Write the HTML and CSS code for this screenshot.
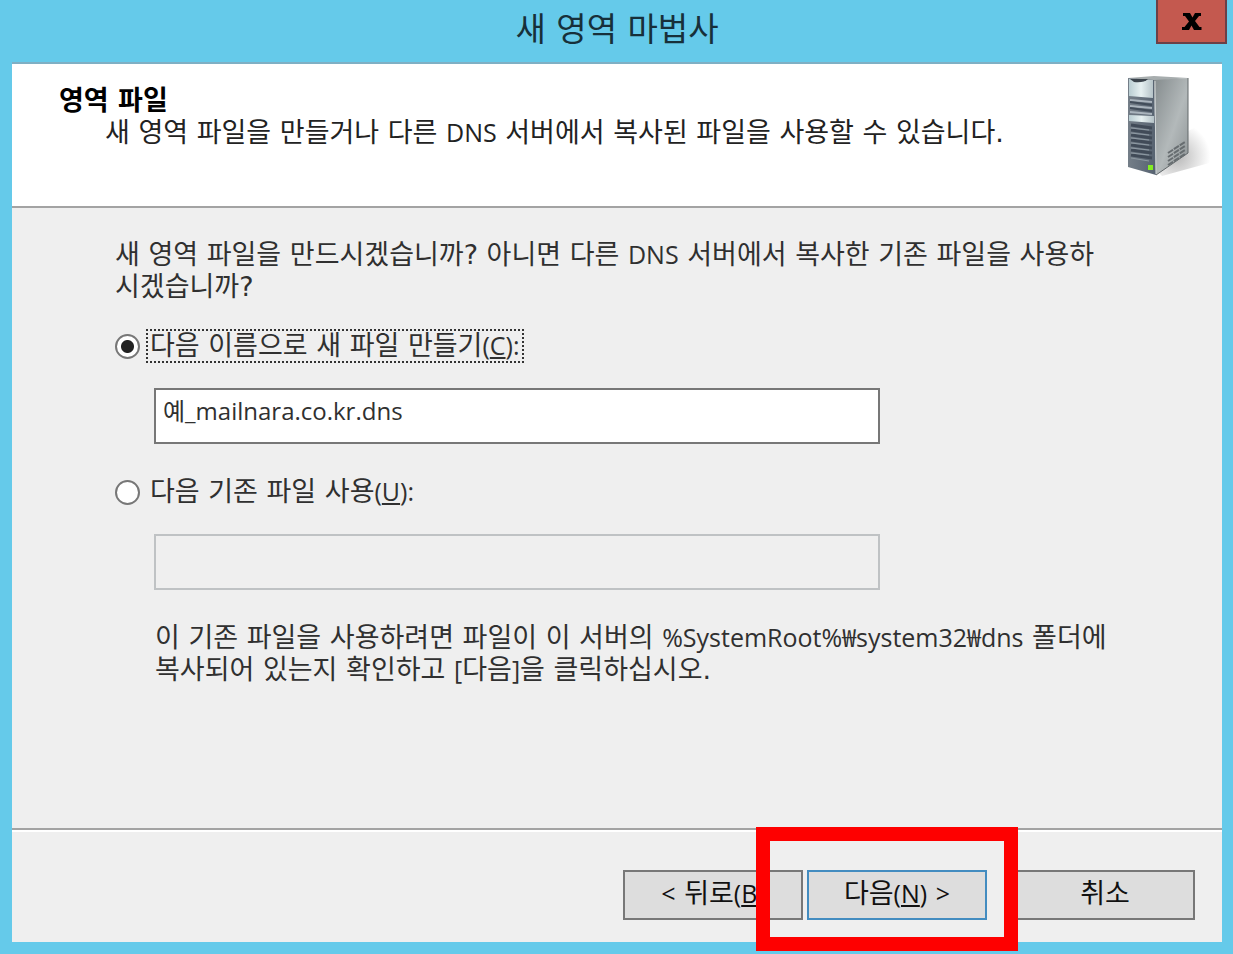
FILE: index.html
```html
<!DOCTYPE html>
<html lang="ko">
<head>
    <meta charset="UTF-8">
    <meta name="viewport" content="width=device-width, initial-scale=1.0">
    <title>새 영역 마법사</title>
    <link rel="stylesheet" href="styles.css">
</head>
<body>
    <div class="window">
        <div class="titlebar">
            <h1>새 영역 마법사</h1>
            <button type="button" class="close" aria-label="닫기">
                <svg width="20" height="17" viewBox="0 0 20 17">
                    <path d="M1 0H8L10.500 4.500 13 0H19V3H17L13 8 17.500 14H19.500V17H12L9.500 12.500 7 17H0V14H2.500L7 8.500 3 3H1z"/>
                </svg>
            </button>
        </div>

        <form class="dialog">
            <div class="header">
                <div class="header-text">
                    <h2>영역 파일</h2>
                    <p>새 영역 파일을 만들거나 다른 <span class="latin">DNS</span> 서버에서 복사된 파일을 사용할 수 있습니다.</p>
                </div>
                <svg class="server" width="88" height="108" viewBox="0 0 88 108">
                    <defs>
                        <linearGradient id="side" x1="0" y1="0" x2="1" y2="1">
                            <stop offset="0" stop-color="#848b8d"/>
                            <stop offset="0.55" stop-color="#b3b9ba"/>
                            <stop offset="1" stop-color="#8b9193"/>
                        </linearGradient>
                        <linearGradient id="front" x1="0" y1="0" x2="1" y2="0">
                            <stop offset="0" stop-color="#747e88"/>
                            <stop offset="1" stop-color="#566270"/>
                        </linearGradient>
                        <linearGradient id="panel" x1="0" y1="0" x2="1" y2="0">
                            <stop offset="0" stop-color="#b9cdd2"/>
                            <stop offset="0.5" stop-color="#e6f0f1"/>
                            <stop offset="1" stop-color="#b5c3c8"/>
                        </linearGradient>
                        <radialGradient id="shadow" cx="0.35" cy="0.65" r="0.6">
                            <stop offset="0" stop-color="#b8b8b8"/>
                            <stop offset="1" stop-color="#ffffff"/>
                        </radialGradient>
                    </defs>
                    <!-- shadow on the floor -->
                    <path d="M60 58L84 46L87 88L36 102L32 98L60 80z" fill="url(#shadow)"/>
                    <!-- case -->
                    <path d="M2 4L28 2L62 4L28 7z" fill="#a7adae"/>
                    <path d="M28 6L62 4V79L30 101z" fill="url(#side)"/>
                    <path d="M62 4V79L30 101" fill="none" stroke="#62686a" stroke-width="1"/>
                    <path d="M2 4L28 6L30 101L2 93z" fill="url(#front)"/>
                    <path d="M3 5L27 6V24L3 22z" fill="url(#panel)"/>
                    <path d="M4 5L22 5Q18 9 8 8z" fill="#3b444c"/>
                    <path d="M3 41L28 42V49L3 47z" fill="url(#panel)"/>
                    <!-- drive bays -->
                    <path d="M4 26L26 28M4 32L26 34M4 38L26 40" stroke="#aab4bd" stroke-width="2"/>
                    <path d="M4 28L26 31M4 34L26 37" stroke="#424d5a" stroke-width="2"/>
                    <path d="M5 51L26 54M5 56L26 59M5 61L26 64M5 66L26 69M5 71L26 74M5 76L26 79M5 81L26 84" stroke="#414b58" stroke-width="3"/>
                    <path d="M5 54L23 56M5 59L23 61M5 64L23 66M5 69L23 71M5 74L23 76M5 79L23 81M5 84L23 87" stroke="#8e9aa3" stroke-width="1"/>
                    <path d="M29 7L30 100" stroke="#d0d5d6" stroke-width="1"/>
                    <rect x="22" y="91" width="5" height="5" fill="#83ee22"/>
                    <!-- side vents -->
                    <path d="M42 79L59 68M42 83L59 72M42 87L59 76M42 91L59 80" stroke="#676d70" stroke-width="2" stroke-dasharray="6 1"/>
                </svg>
            </div>

            <div class="content">
                <p>새 영역 파일을 만드시겠습니까? 아니면 다른 <span class="latin">DNS</span> 서버에서 복사한 기존 파일을 사용하시겠습니까?</p>

                <div class="option">
                    <input type="radio" name="zone" id="newFile" checked>
                    <label for="newFile" class="focused">다음 이름으로 새 파일 만들기<span class="latin">(<u>C</u>):</span></label>
                </div>
                <input type="text" class="field" aria-label="새 파일 이름" value="예_mailnara.co.kr.dns">

                <div class="option">
                    <input type="radio" name="zone" id="oldFile">
                    <label for="oldFile">다음 기존 파일 사용<span class="latin">(<u>U</u>):</span></label>
                </div>
                <input type="text" class="field" aria-label="기존 파일 이름" disabled>

                <p class="note">이 기존 파일을 사용하려면 파일이 이 서버의 <span class="latin">%SystemRoot%₩system32₩dns</span> 폴더에 복사되어 있는지 확인하고 <span class="latin">[</span>다음<span class="latin">]</span>을 클릭하십시오.</p>
            </div>

            <div class="footer">
                <button type="button"><span class="latin">&lt;</span> 뒤로<span class="latin">(<u>B</u>)</span></button>
                <div class="marked">
                    <button type="button" class="default">다음<span class="latin">(<u>N</u>)</span> <span class="latin">&gt;</span></button>
                </div>
                <button type="button" class="cancel">취소</button>
            </div>
        </form>
    </div>
</body>
</html>
```
FILE: styles.css
```css
* {
    box-sizing: border-box;
}

body {
    margin: 0;
    font-family: "DejaVu Sans", "Noto Sans CJK KR", sans-serif;
    font-size: 27px;
    line-height: 32px;
    color: #303030;
}

h1, h2, p {
    margin: 0;
}

button, input {
    font: inherit;
    color: inherit;
}

u {
    text-decoration-thickness: 2px;
    text-underline-offset: 2px;
}

.latin {
    font-family: "Open Sans", "Noto Sans CJK KR", sans-serif;
    font-size: 25px;
    line-height: 1;
}

.window {
    min-height: 100vh;
    display: flex;
    flex-direction: column;
    padding: 0 11px 12px 12px;
    background-color: #65caea;
}

.titlebar {
    position: relative;
    height: 62px;
    padding-bottom: 2px;
    display: flex;
    justify-content: center;
    align-items: center;
}

.titlebar h1 {
    font-size: 33px;
    font-weight: 400;
    color: #17303a;
}

.close {
    position: absolute;
    top: -2px;
    right: -5px;
    width: 71px;
    height: 46px;
    padding: 0;
    display: flex;
    justify-content: center;
    align-items: center;
    border: 2px solid #6b4048;
    background-color: #c4594f;
}

.dialog {
    flex: 1;
    display: flex;
    flex-direction: column;
    border-top: 2px solid #7fafc4;
    background-color: #efefef;
}

.header {
    display: flex;
    justify-content: space-between;
    height: 144px;
    padding: 10px 8px 0 47px;
    background-color: #fff;
    border-bottom: 2px solid #a3a3a3;
}

.header-text {
    padding-top: 11px;
    color: #222;
}

.header h2 {
    font-size: 27px;
    font-weight: 700;
    color: #000;
}

.header p {
    padding-left: 46px;
}

.server {
    flex-shrink: 0;
}

.content {
    flex: 1;
    padding: 31px 110px 30px 103px;
}

.option {
    display: flex;
    align-items: center;
    gap: 6px;
    height: 34px;
}

.content p + .option {
    margin-top: 26px;
}

.field + .option {
    margin-top: 31px;
}

.option label {
    padding: 0 2px;
    border: 2px solid transparent;
    line-height: 30px;
}

.option .focused {
    border: 2px dotted #333;
}

.option input {
    appearance: none;
    width: 25px;
    height: 25px;
    margin: 0;
    border: 2px solid #777;
    border-radius: 50%;
    background-color: #fff;
}

.option input:checked {
    background-image: radial-gradient(circle, #222 6px, transparent 7px);
}

.field {
    display: block;
    width: 726px;
    max-width: 100%;
    height: 56px;
    margin: 25px 0 0 39px;
    padding: 0 7px 13px;
    border: 2px solid #777;
    border-radius: 0;
    background-color: #fff;
    font-family: "Open Sans", "Noto Sans CJK KR", sans-serif;
    font-size: 24px;
}

.field:disabled {
    border-color: #bfc2c4;
    background-color: #efefef;
}

.note {
    padding: 32px 0 0 40px;
}

.footer {
    display: flex;
    justify-content: flex-end;
    height: 114px;
    padding: 40px 27px 0;
    border-top: 2px solid #a3a3a3;
    box-shadow: inset 0 2px #fff;
}

.footer button {
    width: 180px;
    height: 50px;
    padding: 0 0 2px;
    border: 2px solid #777;
    background-color: #dddddd;
    color: #111;
}

.footer .default {
    border-color: #438cc0;
}

.footer .cancel {
    margin-left: 28px;
}

.marked {
    position: relative;
    margin-left: 4px;
}

/* red frame round the next button */
.marked::after {
    content: "";
    box-sizing: border-box;
    position: absolute;
    top: -43px;
    left: -51px;
    width: 262px;
    height: 124px;
    border: 14px solid #fe0000;
    z-index: 1;
    pointer-events: none;
}
```
